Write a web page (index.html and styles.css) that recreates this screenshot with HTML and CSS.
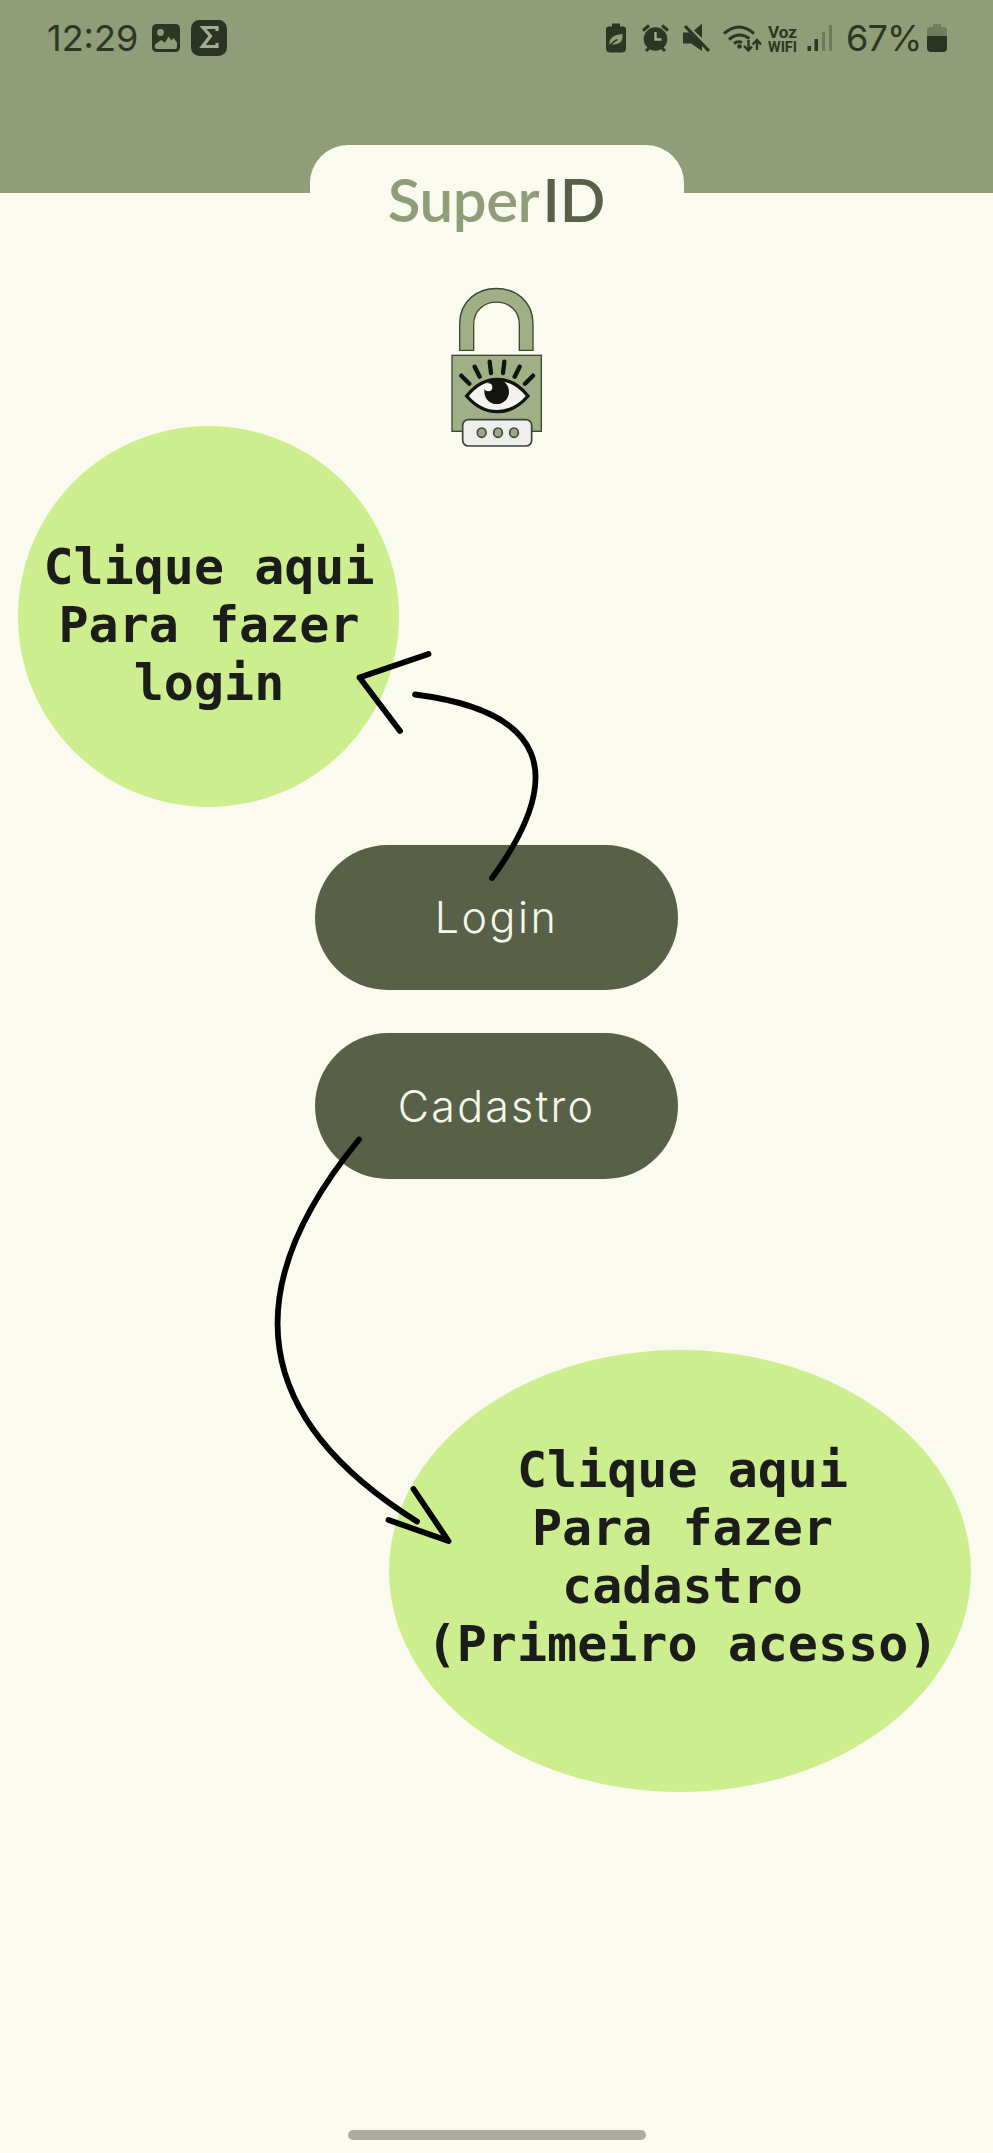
FILE: index.html
```html
<!DOCTYPE html>
<html lang="pt-BR">
<head>
<meta charset="utf-8">
<title>SuperID</title>
<link rel="stylesheet" href="styles.css">
</head>
<body>
<div class="screen">
  <header class="header">
    <div class="status">
      <span class="clock">12:29</span>
      <svg class="status-left" width="80" height="40" viewBox="0 0 80 40">
        <rect x="4" y="6" width="28" height="28" rx="4.5" fill="#2b3722"/>
        <circle cx="12.5" cy="14.500" r="3.400" fill="#8f9d78"/>
        <path d="M7 28V26.500L13 22l4 2.500 3.500-6 3 4 2-2.500 3.500 4.500V29q0 2-2 2H9q-2 0-2-2z" fill="#8f9d78"/>
        <rect x="43" y="2" width="36" height="36" rx="8.500" fill="#2b3322"/>
        <path d="M69 13v-3.500H55L62.500 18 54.500 28.500H69V25" fill="none" stroke="#a3ae90" stroke-width="3.200"/>
      </svg>
      <svg class="status-right" width="246" height="40" viewBox="600 18 246 40">
        <g fill="#2b3722">
          <path d="M612 23.500h8v3h3q3 0 3 3V48q0 4.500-4.500 4.500h-11Q606 52.500 606 48V29.500q0-3 3-3h3z"/>
          <path d="M609.500 45q-1-10 13-11 1 11-10 10.500z" fill="#8f9d78"/>
          <path d="M609.500 46.500q3-5 8-7" stroke="#2b3722" stroke-width="1.500" fill="none"/>
          <circle cx="655.500" cy="39" r="11.800"/>
          <path d="M643 30.500l6-5M668 30.500l-6-5M646 51l4-4M665 51l-4-4" stroke="#2b3722" stroke-width="3" fill="none"/>
          <path d="M655.500 32v7.500h6" stroke="#a3ae90" stroke-width="2.400" fill="none"/>
          <path d="M683 32.500h6L702 44v7L691 43.500h-8zM694 30.500l8-7V38z"/>
          <path d="M685 26l24 25" stroke="#2b3722" stroke-width="3.200"/>
          <path d="M724 33.500q15-13 30 0M729 39.500q10-8.500 20.500-1M734 43.500q4-3 8-1" fill="none" stroke="#2b3722" stroke-width="3"/>
          <circle cx="739.500" cy="46.500" r="2.300"/>
          <path d="M748.500 40v10M744 46l4.500 4.500 3.500-4M757 50V40.500M752.500 44.500l4.500-4.500 4 4.500" fill="none" stroke="#2b3722" stroke-width="2.400"/>
          <text class="voz" x="768" y="38" textLength="29" lengthAdjust="spacingAndGlyphs">Voz</text>
          <text class="wifi" x="768" y="51.500" textLength="29" lengthAdjust="spacingAndGlyphs">WIFI</text>
          <rect x="807.500" y="46" width="3.500" height="5"/>
          <rect x="814.500" y="39" width="3.500" height="12"/>
          <rect x="822" y="32" width="3" height="19" fill="#6f7c5b"/>
          <rect x="829" y="25" width="3" height="26" fill="#6f7c5b"/>
        </g>
      </svg>
      <span class="percent">67%</span>
      <svg class="battery" width="20" height="40" viewBox="0 0 20 40">
        <path d="M6 6h8v3h2.500Q20 9 20 12.500V19H0v-6.500Q0 9 3.500 9H6z" fill="#707c5c"/>
        <path d="M0 18h20v12q0 4-4 4H4q-4 0-4-4z" fill="#2b3322"/>
      </svg>
    </div>
    <h1 class="tab"><span class="brand">Super</span><span class="brand-id">ID</span></h1>
  </header>
  <main class="main">
    <svg class="lock" width="130" height="190" viewBox="0 0 390 570">
      <g stroke="#3c4932" stroke-width="4">
        <path d="M89 241V162C89 20 309 20 309 162V241H268V164C268 74 131 74 131 164V241z" fill="#9fb086"/>
        <rect x="66" y="256" width="268" height="228" fill="#9fb086"/>
      </g>
      <path d="M94 317l24 24M134 290l15 30M179 275l4 34M223 275l-4 34M269 290l-15 30M309 317l-24 24" stroke="#11140f" stroke-width="13" stroke-linecap="round"/>
      <path d="M110 378Q150 328 202 328T294 378Q254 425 202 425T110 378z" fill="#f3f3f0" stroke="#11140f" stroke-width="10"/>
      <circle cx="200" cy="365" r="37" fill="#11140f"/>
      <circle cx="175" cy="352" r="12" fill="#f3f3f0"/>
      <rect x="98" y="449" width="207" height="79" rx="17" fill="#eeeeec" stroke="#3c4140" stroke-width="5"/>
      <g fill="#9ba68e" stroke="#3f4a36" stroke-width="5">
        <ellipse cx="155" cy="488" rx="13" ry="14"/><ellipse cx="204" cy="488" rx="13" ry="14"/><ellipse cx="252" cy="488" rx="13" ry="14"/>
      </g>
    </svg>
    <nav class="actions">
      <button class="action login">Login</button>
      <button class="action register">Cadastro</button>
    </nav>
  </main>
  <footer class="home"></footer>

  <aside class="callout callout-login">Clique aqui<br>Para fazer<br>login</aside>
  <aside class="callout callout-register">Clique aqui<br>Para fazer<br>cadastro<br>(Primeiro acesso)</aside>
  <svg class="arrows" width="993" height="2153" viewBox="0 0 993 2153">
    <path d="M415 694.500Q608 719 492 878"/>
    <path d="M428.500 654L359.500 677.500L400 731"/>
    <path d="M359 1139.500Q171 1368 417 1521.500"/>
    <path d="M413.500 1489L448.500 1541L388.500 1520"/>
  </svg>
</div>
</body>
</html>
```
FILE: styles.css
```css
* { box-sizing: border-box; }
body { margin: 0; background: #fbfaee; }

.screen {
  position: relative;
  display: flex;
  flex-direction: column;
  width: 993px;
  height: 2153px;
  overflow: hidden;
  background: #fbfaee;
}

.header {
  display: flex;
  flex-direction: column;
  align-items: center;
  height: 193px;
  background: #8f9d78;
}

.status {
  display: flex;
  align-items: center;
  width: 100%;
  height: 145px;
  padding: 18px 45px 87px 47px;
  color: #2b3722;
  font-family: Inter, sans-serif;
  font-size: 36px;
  line-height: 40px;
}
.clock { width: 101px; }
.status-right { margin-left: 372px; }
.percent { width: 81px; letter-spacing: -0.8px; }
.voz { font: bold 17px Roboto, sans-serif; }
.wifi { font: bold 14px Roboto, sans-serif; }

.tab {
  flex: none;
  width: 374px;
  height: 110px;
  margin: 0;
  border-radius: 38px 38px 0 0;
  background: #fbfaee;
  font: 600 60px/108px Lato, sans-serif;
  text-align: center;
  white-space: nowrap;
}
.brand { color: #8f9d78; letter-spacing: -0.4px; }
.brand-id { margin-left: 3px; color: #586148; }

.main {
  flex: 1;
  display: flex;
  flex-direction: column;
  align-items: center;
  padding-top: 77px;
}
.lock { margin-right: 3px; }
.actions {
  display: flex;
  flex-direction: column;
  gap: 43px;
  margin-top: 384.500px;
}
.action {
  width: 363px;
  height: 145.500px;
  padding: 0;
  border: 0;
  border-radius: 73px;
  background: #586148;
  color: #f4f7ea;
  font: 350 43px Inter, sans-serif;
}
.login { letter-spacing: 2.500px; }
.register { letter-spacing: 2.200px; }

.home {
  align-self: center;
  width: 298px;
  height: 10px;
  margin-bottom: 13px;
  border-radius: 5px;
  background: #acac9f;
}

.callout {
  position: absolute;
  border-radius: 50%;
  background: #ccee8e;
  color: #1c1c1a;
  font: bold 50px/58px "DejaVu Sans Mono", monospace;
  text-align: center;
  white-space: nowrap;
}
.callout-login {
  left: 18px;
  top: 426px;
  width: 381px;
  height: 381px;
  padding: 112px 0 0 1px;
}
.callout-register {
  left: 389px;
  top: 1350px;
  width: 582px;
  height: 442px;
  padding: 91px 0 0 5px;
}

.arrows {
  position: absolute;
  left: 0;
  top: 0;
  fill: none;
  stroke: #000;
  stroke-width: 5.800px;
  stroke-linecap: round;
  stroke-linejoin: round;
}
```
